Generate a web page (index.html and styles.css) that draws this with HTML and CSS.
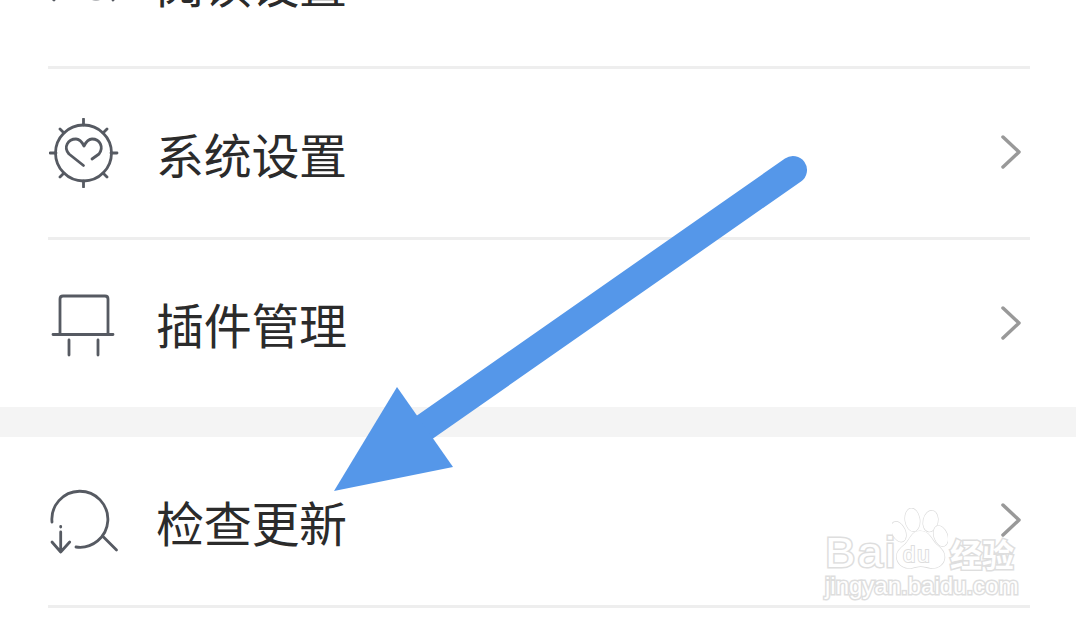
FILE: index.html
```html
<!DOCTYPE html>
<html lang="zh-CN">
  <head>
    <meta charset="UTF-8" />
    <title>设置</title>
    <link rel="stylesheet" href="styles.css">
  </head>
  <body>
    <div class="page">
      <ul class="menu">
        <li class="row row-line">
          <svg class="row-icon" viewBox="0 0 70 70">
            <path d="M2 50l3 3M66 50l-2 3" />
            <ellipse class="icon-soft" cx="47" cy="50" rx="6" ry="4" />
          </svg>
          <span class="row-label">阅读设置</span>
        </li>
        <li class="row row-line">
          <svg class="row-icon" viewBox="0 0 70 70">
            <circle cx="34.5" cy="35" r="28" />
            <path d="M34.5 1v6M34.5 63v6M1 35h6M62 35h6M11 11l4 4M54 55l4 4M58 11l-4 4M15 55l-4 4" />
            <path d="M34.5 47.5 20 36c-6-7-1-15 7-15 4 0 6 3 8 7 2-4 4-7 8-7 8 0 12 8 7 15l-7 5" />
          </svg>
          <span class="row-label">系统设置</span>
          <svg class="chevron" viewBox="0 0 24 36"><path d="M3 3l16 15L3 33" /></svg>
        </li>
        <li class="row">
          <svg class="row-icon" viewBox="0 0 70 70">
            <path d="M11 45V10q0-3 3-3h42q3 0 3 3v35" />
            <path d="M4 45.5h60M20 51v15M49 51v15" />
          </svg>
          <span class="row-label">插件管理</span>
          <svg class="chevron" viewBox="0 0 24 36"><path d="M3 3l16 15L3 33" /></svg>
        </li>
      </ul>
      <div class="band"></div>
      <ul class="menu">
        <li class="row row-line">
          <svg class="row-icon" viewBox="0 0 70 70">
            <path d="M3 36A28 28 0 1 1 27 61" />
            <path d="M53.5 50l14 14M11.7 40.5v.5M11.7 46v20M3 56l8.7 10 9-10" />
          </svg>
          <span class="row-label">检查更新</span>
          <svg class="chevron" viewBox="0 0 24 36"><path d="M3 3l16 15L3 33" /></svg>
        </li>
      </ul>

      <svg class="arrow" viewBox="0 0 1076 624">
        <path class="arrow-shaft" d="M793 170 425 427" />
        <polygon class="arrow-head" points="334,491 397,387 453,467" />
      </svg>

      <div class="watermark">
        <div class="wm-top">
          <span class="wm-bai">Bai</span>
          <span class="wm-paw">
            <svg viewBox="0 0 170 185" preserveAspectRatio="none">
              <ellipse cx="20" cy="72" rx="20" ry="32" transform="rotate(-25 20 72)" />
              <ellipse cx="62" cy="36" rx="22" ry="35" transform="rotate(-8 62 36)" />
              <ellipse cx="117" cy="40" rx="22" ry="32" transform="rotate(12 117 40)" />
              <ellipse cx="148" cy="85" rx="20" ry="32" transform="rotate(-20 148 85)" />
              <path d="M85 70c-25 0-30 25-45 40-15 12-30 25-25 45 5 20 25 30 45 27 12-2 18-5 27-5s18 3 30 5c20 3 38-8 42-27 4-20-10-33-25-45-15-15-20-40-49-40z" />
            </svg>
            <span class="wm-du">du</span>
          </span>
          <span class="wm-cn">经验</span>
        </div>
        <div class="wm-url">jingyan.baidu.com</div>
      </div>
    </div>
  </body>
</html>
```

FILE: styles.css
```css
* {
  margin: 0;
  padding: 0;
  box-sizing: border-box;
}

html,
body {
  height: 100%;
  overflow: hidden;
  background-color: #ffffff;
}

body {
  font-family: "Noto Sans CJK SC", "Liberation Sans", sans-serif;
  color: #2b2b2b;
}

.page {
  position: relative;
  width: 1076px;
  height: 624px;
  overflow: hidden;
}

.menu {
  list-style: none;
}

.menu:first-child {
  margin-top: -102px;
}

.row {
  display: flex;
  align-items: center;
  height: 167px;
  margin: 0 46px 0 48px;
}

.row-line {
  border-bottom: 3px solid #eeeeee;
  height: 171px;
}

.row-icon {
  width: 70px;
  height: 70px;
  margin-left: 1px;
  margin-right: 37px;
  flex-shrink: 0;
  fill: none;
  stroke: #565a62;
  stroke-width: 2.8;
  stroke-linecap: round;
  stroke-linejoin: round;
}

.icon-soft {
  fill: #b5b7ba;
  stroke: none;
}

.row-label {
  font-size: 48px;
  line-height: 60px;
  letter-spacing: -0.3px;
  margin-top: -1px;
}

.chevron {
  width: 24px;
  height: 36px;
  margin-left: auto;
  margin-right: 6px;
  margin-top: -2px;
  fill: none;
  stroke: #999999;
  stroke-width: 3.5;
  stroke-linecap: round;
  stroke-linejoin: round;
}

.band {
  height: 30px;
  background-color: #f4f4f4;
}

.arrow {
  position: absolute;
  top: 0;
  left: 0;
  width: 1076px;
  height: 624px;
}

.arrow-shaft {
  fill: none;
  stroke: #5597e9;
  stroke-width: 28;
  stroke-linecap: round;
}

.arrow-head {
  fill: #5597e9;
}

.watermark {
  position: absolute;
  left: 825px;
  top: 507px;
  width: 195px;
  color: #ffffff;
  -webkit-text-stroke: 3px #dedede;
  paint-order: stroke fill;
  font-family: "Liberation Sans", sans-serif;
}

.wm-top {
  display: flex;
  align-items: flex-end;
  height: 68px;
}

.wm-bai {
  font-size: 43px;
  line-height: 46px;
  letter-spacing: 2px;
  width: 67px;
  transform: scaleX(1.06);
  transform-origin: left center;
}

.wm-paw {
  position: relative;
  width: 58px;
  height: 68px;
  flex-shrink: 0;
}

.wm-paw svg {
  position: absolute;
  left: 0;
  top: 1px;
  width: 56px;
  height: 61px;
  fill: #ffffff;
  stroke: #dcdcdc;
  stroke-width: 4;
}

.wm-du {
  position: absolute;
  left: 11px;
  top: 35px;
  font-size: 22px;
  line-height: 26px;
  letter-spacing: 2px;
  -webkit-text-stroke-width: 2px;
}

.wm-cn {
  font-family: "Noto Sans CJK SC", sans-serif;
  font-size: 32px;
  line-height: 44px;
  font-weight: 700;
  white-space: nowrap;
}

.wm-url {
  margin-top: -4px;
  font-size: 24px;
  line-height: 30px;
  white-space: nowrap;
}
```
